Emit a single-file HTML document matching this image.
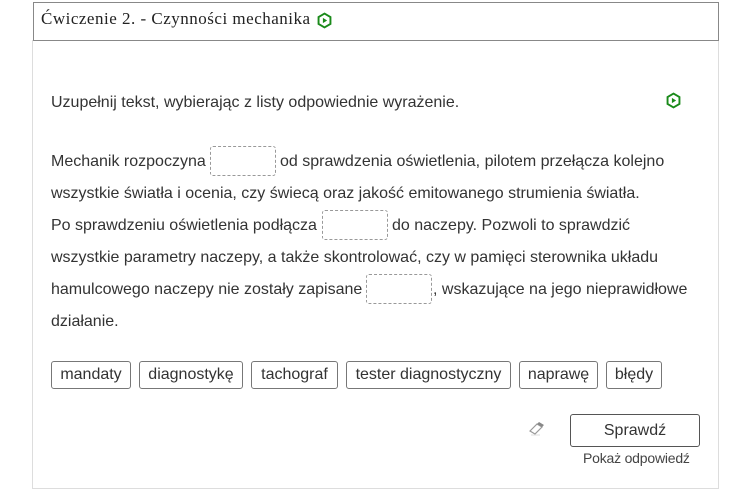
<!DOCTYPE html>
<html><head><meta charset="utf-8"><style>
body{margin:0;width:750px;height:494px;background:#fff;position:relative;overflow:hidden;font-family:"Liberation Sans",sans-serif;color:#333}
.a{position:absolute;white-space:nowrap}
.t{font-size:16px;line-height:20px}
.gap{position:absolute;width:64px;height:28px;border:1px dashed #999;border-radius:3px}
.chip{position:absolute;top:361px;height:26px;border:1px solid #777;border-radius:3px;font-size:16px;line-height:26px;text-align:center}
</style></head><body>
<div class="a" style="left:32px;top:40px;width:685px;height:448px;border:1px solid #ddd;border-top:none"></div>
<div class="a" style="left:33px;top:2px;width:684px;height:37px;border:1px solid #888;background:#fff"></div>
<div class="a" style="left:41px;top:9px;font-family:'Liberation Serif',serif;font-size:17px;letter-spacing:0.5px;color:#222">Ćwiczenie 2. - Czynności mechanika</div>
<svg class="a" style="left:316px;top:12px" width="17" height="17" viewBox="0 0 16 16"><path d="M8 1.5 L13.6 4.75 V11.25 L8 14.5 L2.4 11.25 V4.75 Z" fill="none" stroke="#1a8a1a" stroke-width="1.8"/><path d="M6.5 5.5 L10.5 8 L6.5 10.5 Z" fill="#1a8a1a"/></svg>
<svg class="a" style="left:665px;top:92px" width="17" height="17" viewBox="0 0 16 16"><path d="M8 1.5 L13.6 4.75 V11.25 L8 14.5 L2.4 11.25 V4.75 Z" fill="none" stroke="#1a8a1a" stroke-width="1.8"/><path d="M6.5 5.5 L10.5 8 L6.5 10.5 Z" fill="#1a8a1a"/></svg>
<div class="a t" style="left:51px;top:93px">Uzupełnij tekst, wybierając z listy odpowiednie wyrażenie.</div>
<div class="a t" style="left:51px;top:152px">Mechanik rozpoczyna</div>
<div class="gap" style="left:210px;top:146px"></div>
<div class="a t" style="left:280px;top:152px">od sprawdzenia oświetlenia, pilotem przełącza kolejno</div>
<div class="a t" style="left:51px;top:184px">wszystkie światła i ocenia, czy świecą oraz jakość emitowanego strumienia światła.</div>
<div class="a t" style="left:51px;top:216px">Po sprawdzeniu oświetlenia podłącza</div>
<div class="gap" style="left:322px;top:210px"></div>
<div class="a t" style="left:392px;top:216px">do naczepy. Pozwoli to sprawdzić</div>
<div class="a t" style="left:51px;top:248px">wszystkie parametry naczepy, a także skontrolować, czy w pamięci sterownika układu</div>
<div class="a t" style="left:51px;top:280px">hamulcowego naczepy nie zostały zapisane</div>
<div class="gap" style="left:366px;top:274px"></div>
<div class="a t" style="left:433px;top:280px">, wskazujące na jego nieprawidłowe</div>
<div class="a t" style="left:51px;top:312px">działanie.</div>
<div class="chip" style="left:51px;width:78px">mandaty</div>
<div class="chip" style="left:139px;width:102px">diagnostykę</div>
<div class="chip" style="left:251px;width:85px">tachograf</div>
<div class="chip" style="left:346px;width:163px">tester diagnostyczny</div>
<div class="chip" style="left:519px;width:77px">naprawę</div>
<div class="chip" style="left:606px;width:54px">błędy</div>
<svg class="a" style="left:528px;top:421px" width="18" height="16" viewBox="0 0 18 16"><path d="M2 10 L9 3 L14 6 L7 13 Z" fill="#fff" stroke="#999" stroke-width="1.2"/><path d="M9 3 L11 1 L16 4 L14 6 Z" fill="#888"/><path d="M3 14 H12" stroke="#ddd"/></svg>
<div class="a" style="left:570px;top:414px;width:128px;height:31px;border:1px solid #555;border-radius:3px;font-size:16px;line-height:31px;text-align:center;color:#333">Sprawdź</div>
<div class="a" style="left:583px;top:450px;font-size:14px;color:#444;letter-spacing:-0.2px">Pokaż odpowiedź</div>
</body></html>
